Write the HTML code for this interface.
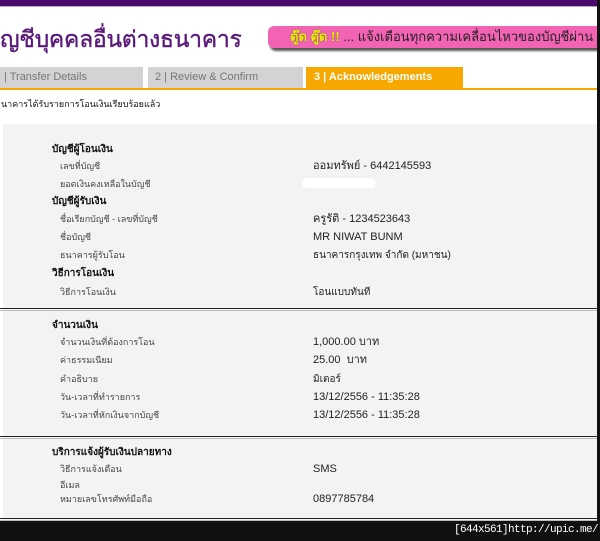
<!DOCTYPE html>
<html><head><meta charset="utf-8"><style>
*{margin:0;padding:0;box-sizing:border-box}
body{width:600px;height:541px;background:#fff;position:relative;overflow:hidden;font-family:"Liberation Sans","Noto Sans CJK SC",sans-serif;font-size:11px;color:#222}
.a{position:absolute;white-space:nowrap;line-height:13px}
.h{font-weight:bold;color:#111;left:52px;font-size:10px}
.l{left:60px;color:#444;font-size:9px}
.v{left:313px;color:#222}
</style></head><body>
<div class="a" style="left:0;top:0;width:600px;height:6px;background:#4b0a6e"></div>
<div class="a" style="left:0;top:6px;width:600px;height:1px;background:#b9a4c8"></div>
<div class="a" style="left:0;top:24px;font-size:23px;line-height:30px;color:#5a1a7a;letter-spacing:-0.3px;-webkit-text-stroke:0.4px #5a1a7a">ญชีบุคคลอื่นต่างธนาคาร</div>
<div class="a" style="left:268px;top:26px;width:329px;height:22px;background:#f263b4;border-radius:6px 0 0 6px;box-shadow:2px 3px 2px #555;overflow:hidden">
<div class="a" style="left:22px;top:3px;font-size:13px;line-height:16px;color:#222"><b style="color:#e8f000;text-shadow:0 0 1px #333">ตู๊ด ตู๊ด !!</b> ... แจ้งเตือนทุกความเคลื่อนไหวของบัญชีผ่าน</div></div>
<div class="a" style="left:0;top:67px;width:143px;height:22px;background:#d3d3d3"></div>
<div class="a" style="left:148px;top:67px;width:155px;height:22px;background:#d3d3d3"></div>
<div class="a" style="left:306px;top:67px;width:157px;height:22px;background:#f7a800"></div>
<div class="a" style="left:0;top:88px;width:597px;height:2px;background:#f7a800"></div>
<div class="a" style="left:4px;top:71px;color:#777">| Transfer Details</div>
<div class="a" style="left:155px;top:71px;color:#777">2 | Review &amp; Confirm</div>
<div class="a" style="left:314px;top:71px;color:#fff;font-weight:bold">3 | Acknowledgements</div>
<div class="a" style="left:1px;top:98px;font-size:9px;color:#111">นาคารได้รับรายการโอนเงินเรียบร้อยแล้ว</div>
<div class="a" style="left:3px;top:124px;width:594px;height:397px;background:#f3f3f3"></div>
<div class="a" style="left:597px;top:0;width:3px;height:541px;background:#111"></div>
<div class="a" style="left:0;top:308px;width:597px;height:1px;background:#222"></div>
<div class="a" style="left:0;top:310px;width:597px;height:1px;background:#bbb"></div>
<div class="a" style="left:0;top:436px;width:597px;height:1px;background:#222"></div>
<div class="a" style="left:0;top:438px;width:597px;height:1px;background:#bbb"></div>
<div class="a" style="left:0;top:518px;width:597px;height:1px;background:#222"></div>
<div class="a" style="left:0;top:520px;width:597px;height:1px;background:#bbb"></div>
<div class="a" style="left:0;top:521px;width:600px;height:20px;background:#111"></div>
<div class="a" style="left:454px;top:524px;color:#fff;font-size:11px;font-family:'Liberation Mono',monospace;letter-spacing:-0.6px">[644x561]http://upic.me/</div>

<div class="a h" style="top:143px">บัญชีผู้โอนเงิน</div>
<div class="a l" style="top:160px">เลขที่บัญชี</div><div class="a v" style="top:160px">ออมทรัพย์ - 6442145593</div>
<div class="a l" style="top:178px">ยอดเงินคงเหลือในบัญชี</div>
<div class="a" style="left:302px;top:178px;width:74px;height:10px;background:#fff;border-radius:5px"></div>
<div class="a h" style="top:195px">บัญชีผู้รับเงิน</div>
<div class="a l" style="top:213px">ชื่อเรียกบัญชี - เลขที่บัญชี</div><div class="a v" style="top:213px">ครูรัติ - 1234523643</div>
<div class="a l" style="top:231px">ชื่อบัญชี</div><div class="a v" style="top:231px">MR NIWAT BUNM</div>
<div class="a l" style="top:249px">ธนาคารผู้รับโอน</div><div class="a v" style="top:249px;font-size:10px">ธนาคารกรุงเทพ จำกัด (มหาชน)</div>
<div class="a h" style="top:267px">วิธีการโอนเงิน</div>
<div class="a l" style="top:286px">วิธีการโอนเงิน</div><div class="a v" style="top:286px;font-size:10px">โอนแบบทันที</div>

<div class="a h" style="top:319px">จำนวนเงิน</div>
<div class="a l" style="top:336px">จำนวนเงินที่ต้องการโอน</div><div class="a v" style="top:336px">1,000.00 บาท</div>
<div class="a l" style="top:354px">ค่าธรรมเนียม</div><div class="a v" style="top:354px">25.00 &nbsp;บาท</div>
<div class="a l" style="top:373px">คำอธิบาย</div><div class="a v" style="top:373px;font-size:10px">มิเตอร์</div>
<div class="a l" style="top:391px">วัน-เวลาที่ทำรายการ</div><div class="a v" style="top:391px">13/12/2556 - 11:35:28</div>
<div class="a l" style="top:409px">วัน-เวลาที่หักเงินจากบัญชี</div><div class="a v" style="top:409px">13/12/2556 - 11:35:28</div>

<div class="a h" style="top:446px">บริการแจ้งผู้รับเงินปลายทาง</div>
<div class="a l" style="top:463px">วิธีการแจ้งเตือน</div><div class="a v" style="top:463px">SMS</div>
<div class="a l" style="top:479px">อีเมล</div>
<div class="a l" style="top:493px">หมายเลขโทรศัพท์มือถือ</div><div class="a v" style="top:493px">0897785784</div>
</body></html>
